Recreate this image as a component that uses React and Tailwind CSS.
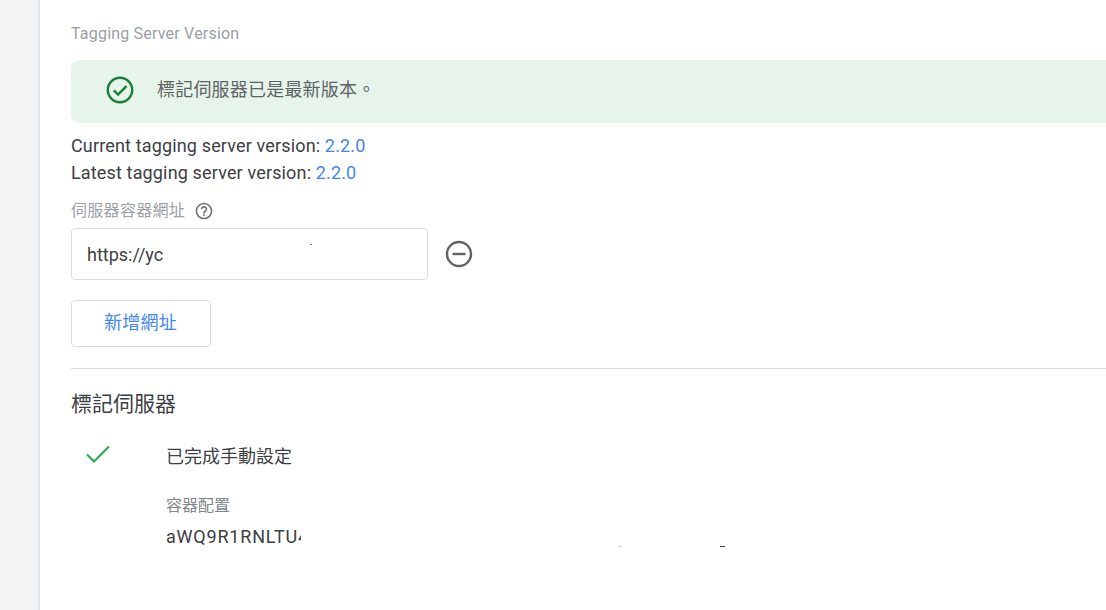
import React from "react";

export default function App() {
  return (
    <div className="flex h-[610px] w-[1106px] overflow-hidden bg-white font-['Roboto','Noto_Sans_CJK_TC',sans-serif] text-[#3c4043]">
      <div className="h-full w-[40px] shrink-0 border-r-2 border-[#e6e7ea] bg-[#f1f3f4]" />
      <main className="flex min-w-0 flex-1 flex-col pl-[31px] pt-[25px]">
        <h2 className="text-[16px] leading-[18px] tracking-[0.2px] text-[#9aa0a6]">Tagging Server Version</h2>

        <div className="mt-[17px] flex h-[63px] items-center rounded-l-[8px] bg-[#e6f4ea] pb-[3px] pl-[35px]">
          <svg width="28" height="28" viewBox="0 0 28 28" fill="none" className="shrink-0">
            <circle cx="14" cy="14" r="12.2" stroke="#188038" strokeWidth="2.4" />
            <path d="M7.8 14.3l4.3 4.3 8.4-8.4" stroke="#188038" strokeWidth="2.4" />
          </svg>
          <span className="ml-[23px] text-[18px] leading-[24px] tracking-[0.2px] text-[#5f6368]">標記伺服器已是最新版本。</span>
        </div>

        <div className="mt-[9px] text-[18px] leading-[27px] tracking-[0.15px] text-[#3c4043]">
          <div>Current tagging server version: <span className="text-[#4285f4]">2.2.0</span></div>
          <div>Latest tagging server version: <span className="text-[#4285f4]">2.2.0</span></div>
        </div>

        <div className="mt-[15px] flex h-[20px] items-center text-[16px] tracking-[0.3px] text-[#9aa0a6]">
          <span>伺服器容器網址</span>
          <svg width="20" height="20" viewBox="0 0 24 24" fill="#757575" className="ml-[9px]">
            <path d="M11 18h2v-2h-2v2zm1-16C6.48 2 2 6.48 2 12s4.48 10 10 10 10-4.48 10-10S17.52 2 12 2zm0 18c-4.41 0-8-3.59-8-8s3.59-8 8-8 8 3.59 8 8-3.59 8-8 8zm0-14c-2.21 0-4 1.79-4 4h2c0-1.1.9-2 2-2s2 .9 2 2c0 2-3 1.75-3 5h2c0-2.25 3-2.5 3-5 0-2.21-1.79-4-4-4z" />
          </svg>
        </div>

        <div className="mt-[7px] flex items-center">
          <div className="relative flex h-[52px] w-[357px] items-center rounded-[4px] border border-[#dadce0] pl-[15px] text-[18px]">
            <span className="block w-[76px] overflow-hidden whitespace-nowrap text-[#3c4043]">https://ycd</span>
            <span className="absolute left-[238px] top-[15px] h-px w-[2px] bg-[#777]" />
          </div>
          <svg width="30" height="30" viewBox="0 0 30 30" fill="none" className="ml-[16px]">
            <circle cx="15" cy="15" r="12" stroke="#5f6368" strokeWidth="2.4" />
            <path d="M8.5 15h13" stroke="#5f6368" strokeWidth="2.4" />
          </svg>
        </div>

        <button className="mt-[20px] h-[47px] w-[140px] rounded-[4px] border border-[#dadce0] bg-white pb-[2px] pr-[1px] text-[18px] tracking-[0.3px] text-[#4285f4]">新增網址</button>

        <div className="mt-[21px] border-t border-[#dadce0]" />

        <h3 className="mt-[21px] text-[21px] leading-[28px] text-[#3c4043]">標記伺服器</h3>

        <div className="mt-[27px] flex">
          <svg width="26" height="20" viewBox="0 0 26 20" fill="none" className="ml-[14px] mt-[-1px] shrink-0">
            <path d="M2 10.5l7 7L24 2.5" stroke="#34a853" strokeWidth="2.2" />
          </svg>
          <div className="ml-[55px] min-w-0">
            <div className="text-[18px] leading-[24px] text-[#3c4043]">已完成手動設定</div>
            <div className="mt-[27px] text-[16px] leading-[20px] text-[#80868b]">容器配置</div>
            <div className="relative mt-[9px] w-[700px] text-[18px] leading-[24px] tracking-[0.8px] text-[#3c4043]">
              <span className="block h-[24px] w-[135px] overflow-hidden whitespace-nowrap">aWQ9R1RNLTU4</span>
              <span className="absolute left-[452px] top-[21px] h-px w-[3px] bg-[#ccc]" />
              <span className="absolute left-[554px] top-[21px] h-px w-[5px] bg-[#444]" />
            </div>
          </div>
        </div>
      </main>
    </div>
  );
}
